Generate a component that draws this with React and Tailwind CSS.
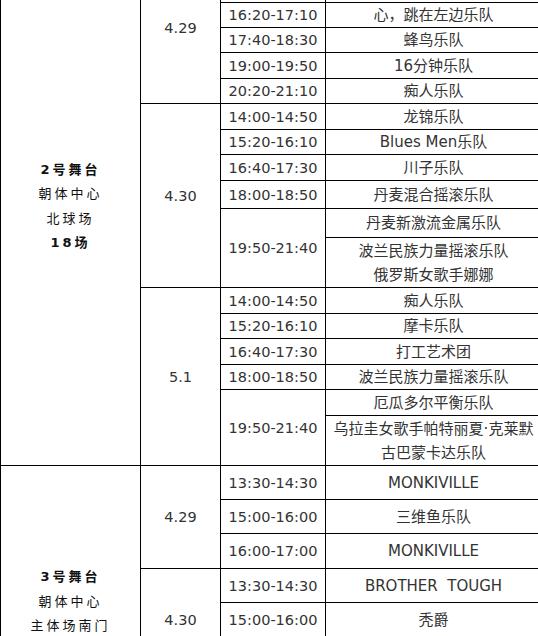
const stages = [
  {
    title: "2号舞台",
    place: ["朝体中心", "北球场"],
    count: "18场",
    pad: "pb-[4px]",
    days: [
      {
        date: "4.29",
        slots: [
          { time: "", rows: [{ h: 26, bands: [""] }] },
          { time: "", rows: [{ h: 25, bands: [""] }] },
          { time: "16:20-17:10", rows: [{ h: 25, bands: ["心，跳在左边乐队"] }] },
          { time: "17:40-18:30", rows: [{ h: 25, bands: ["蜂鸟乐队"] }] },
          { time: "19:00-19:50", rows: [{ h: 26, bands: ["16分钟乐队"] }] },
          { time: "20:20-21:10", rows: [{ h: 25, bands: ["痴人乐队"] }] },
        ],
      },
      {
        date: "4.30",
        slots: [
          { time: "14:00-14:50", rows: [{ h: 26, bands: ["龙锦乐队"] }] },
          { time: "15:20-16:10", rows: [{ h: 25, bands: ["Blues Men乐队"] }] },
          { time: "16:40-17:30", rows: [{ h: 26, bands: ["川子乐队"] }] },
          { time: "18:00-18:50", rows: [{ h: 28, bands: ["丹麦混合摇滚乐队"] }] },
          {
            time: "19:50-21:40",
            rows: [
              { h: 29, bands: ["丹麦新激流金属乐队"] },
              { h: 50, bands: ["波兰民族力量摇滚乐队", "俄罗斯女歌手娜娜"] },
            ],
          },
        ],
      },
      {
        date: "5.1",
        slots: [
          { time: "14:00-14:50", rows: [{ h: 26, bands: ["痴人乐队"] }] },
          { time: "15:20-16:10", rows: [{ h: 25, bands: ["摩卡乐队"] }] },
          { time: "16:40-17:30", rows: [{ h: 26, bands: ["打工艺术团"] }] },
          { time: "18:00-18:50", rows: [{ h: 25, bands: ["波兰民族力量摇滚乐队"] }] },
          {
            time: "19:50-21:40",
            rows: [
              { h: 26, bands: ["厄瓜多尔平衡乐队"] },
              { h: 50, bands: ["乌拉圭女歌手帕特丽夏·克莱默", "古巴蒙卡达乐队"] },
            ],
          },
        ],
      },
    ],
  },
  {
    title: "3号舞台",
    place: ["朝体中心", "主体场南门"],
    count: "",
    pad: "",
    days: [
      {
        date: "4.29",
        slots: [
          { time: "13:30-14:30", rows: [{ h: 34, bands: ["MONKIVILLE"] }] },
          { time: "15:00-16:00", rows: [{ h: 34, bands: ["三维鱼乐队"] }] },
          { time: "16:00-17:00", rows: [{ h: 35, bands: ["MONKIVILLE"] }] },
        ],
      },
      {
        date: "4.30",
        slots: [
          { time: "13:30-14:30", rows: [{ h: 34, bands: ["BROTHER  TOUGH"] }] },
          { time: "15:00-16:00", rows: [{ h: 34, bands: ["秃爵"] }] },
          { time: "", rows: [{ h: 34, bands: [""] }] },
        ],
      },
      {
        date: "",
        slots: [
          { time: "", rows: [{ h: 34, bands: [""] }] },
          { time: "", rows: [{ h: 34, bands: [""] }] },
        ],
      },
    ],
  },
];

const cell = "border border-black p-0 text-center align-middle";

function buildRows() {
  const out = [];
  stages.forEach((stage, si) => {
    const stageSpan = stage.days.reduce(
      (n, d) => n + d.slots.reduce((m, s) => m + s.rows.length, 0),
      0
    );
    stage.days.forEach((day, di) => {
      const daySpan = day.slots.reduce((m, s) => m + s.rows.length, 0);
      day.slots.forEach((slot, ti) => {
        slot.rows.forEach((row, ri) => {
          const first = di === 0 && ti === 0 && ri === 0;
          const dayFirst = ti === 0 && ri === 0;
          const multi = row.bands.length > 1;
          out.push(
            <tr key={`${si}-${di}-${ti}-${ri}`} style={{ height: row.h }}>
              {first && (
                <td
                  rowSpan={stageSpan}
                  className={`${cell} ${stage.pad} text-[13px] leading-[24.5px] tracking-[3px] text-[#111]`}
                >
                  <div className="font-bold">{stage.title}</div>
                  {stage.place.map((p) => (
                    <div key={p}>{p}</div>
                  ))}
                  {stage.count && <div className="font-bold">{stage.count}</div>}
                </td>
              )}
              {dayFirst && (
                <td rowSpan={daySpan} className={`${cell} text-[14.5px] leading-[20px]`}>
                  {day.date}
                </td>
              )}
              {ri === 0 && (
                <td
                  rowSpan={slot.rows.length}
                  className={`${cell} text-[14.5px] leading-[20px]`}
                >
                  {slot.time}
                </td>
              )}
              <td className={`${cell} text-[15px] whitespace-pre`}>
                {row.bands.map((b, i) => (
                  <div
                    key={i}
                    className={
                      multi
                        ? "h-[24px] leading-[24px] overflow-hidden"
                        : "h-[20px] leading-[20px] overflow-hidden"
                    }
                  >
                    {b}
                  </div>
                ))}
              </td>
            </tr>
          );
        });
      });
    });
  });
  return out;
}

export default function App() {
  return (
    <div className="w-[538px] h-[636px] overflow-hidden bg-white">
      <table
        className="-mt-[49px] w-[541px] table-fixed border-collapse text-[#333]"
        style={{ fontFamily: '"DejaVu Sans", "Noto Sans CJK SC", sans-serif' }}
      >
        <colgroup>
          <col className="w-[140px]" />
          <col className="w-[80px]" />
          <col className="w-[105px]" />
          <col className="w-[216px]" />
        </colgroup>
        <tbody>{buildRows()}</tbody>
      </table>
    </div>
  );
}
